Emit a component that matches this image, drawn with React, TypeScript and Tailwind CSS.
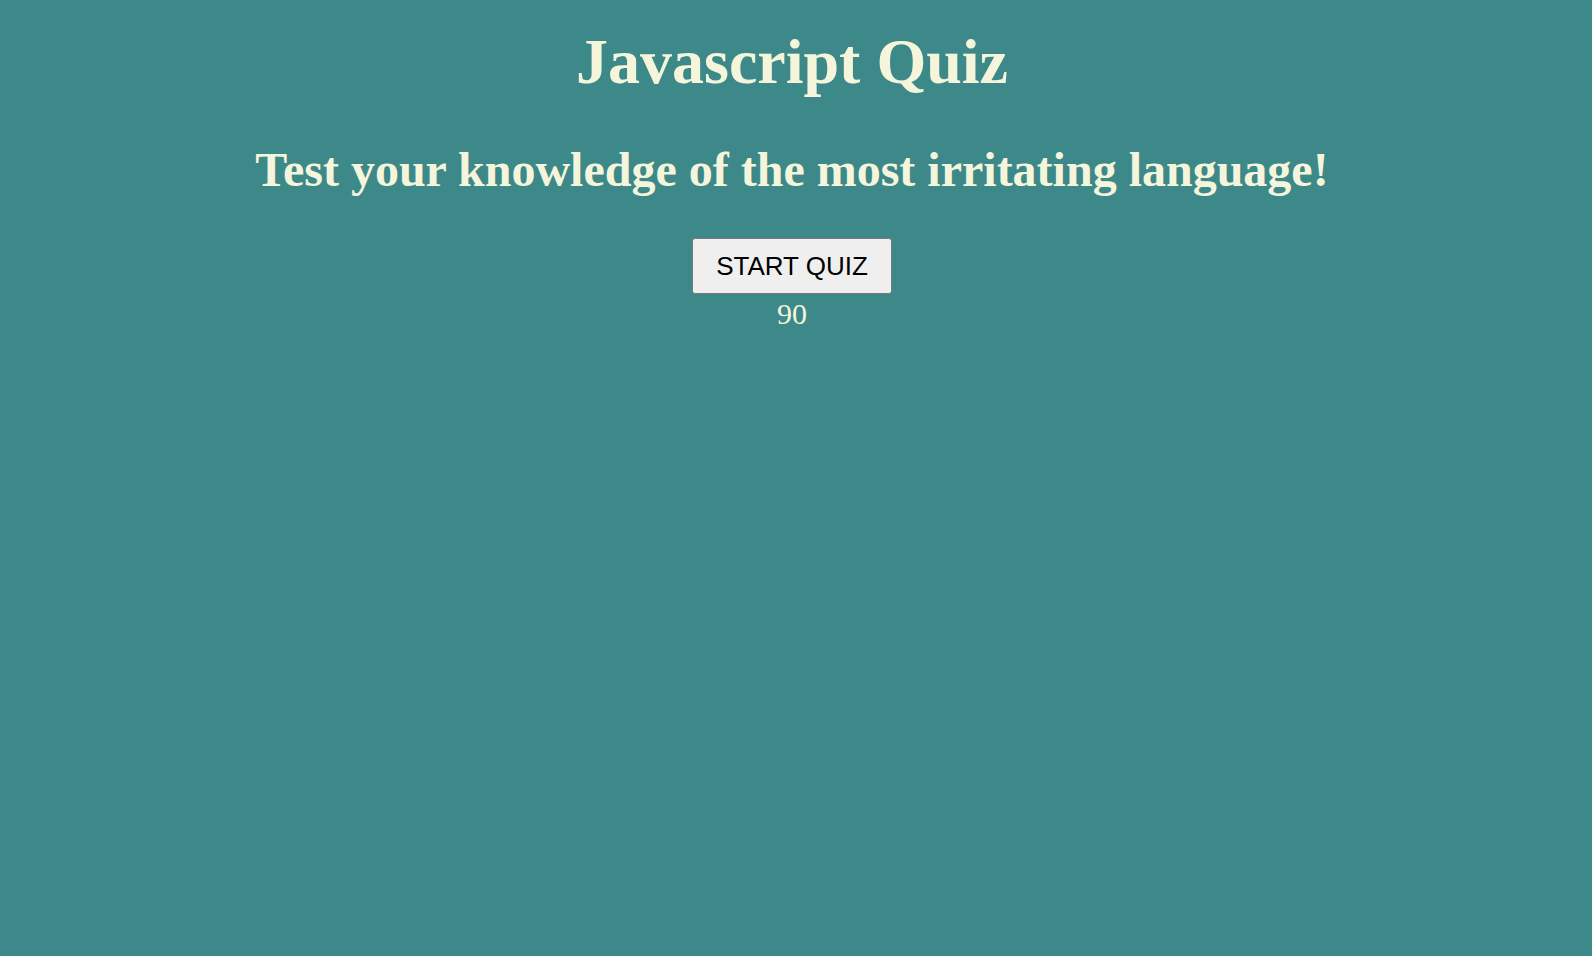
export default function App() {
  return (
    <div className="min-h-screen w-full bg-[#3d898a] pr-[8px] text-center text-[#f5f5dc] font-['Liberation_Serif',serif]">
      {/* Header */}
      <h1 className="pt-[26px] text-[64px] font-bold leading-[71px]">Javascript Quiz</h1>
      <h2 className="mt-[46px] text-[48px] font-bold leading-[53px]">
        Test your knowledge of the most irritating language!
      </h2>

      <div className="mt-[42px] flex flex-col items-center">
        <button className="h-[56px] w-[200px] rounded-[3px] border border-[#777777] bg-[#efefef] font-['Liberation_Sans',sans-serif] text-[26px] leading-[30px] text-black">
          START QUIZ
        </button>
        <div className="mt-[3px] text-[30px] leading-[33px]">90</div>
      </div>
    </div>
  );
}
